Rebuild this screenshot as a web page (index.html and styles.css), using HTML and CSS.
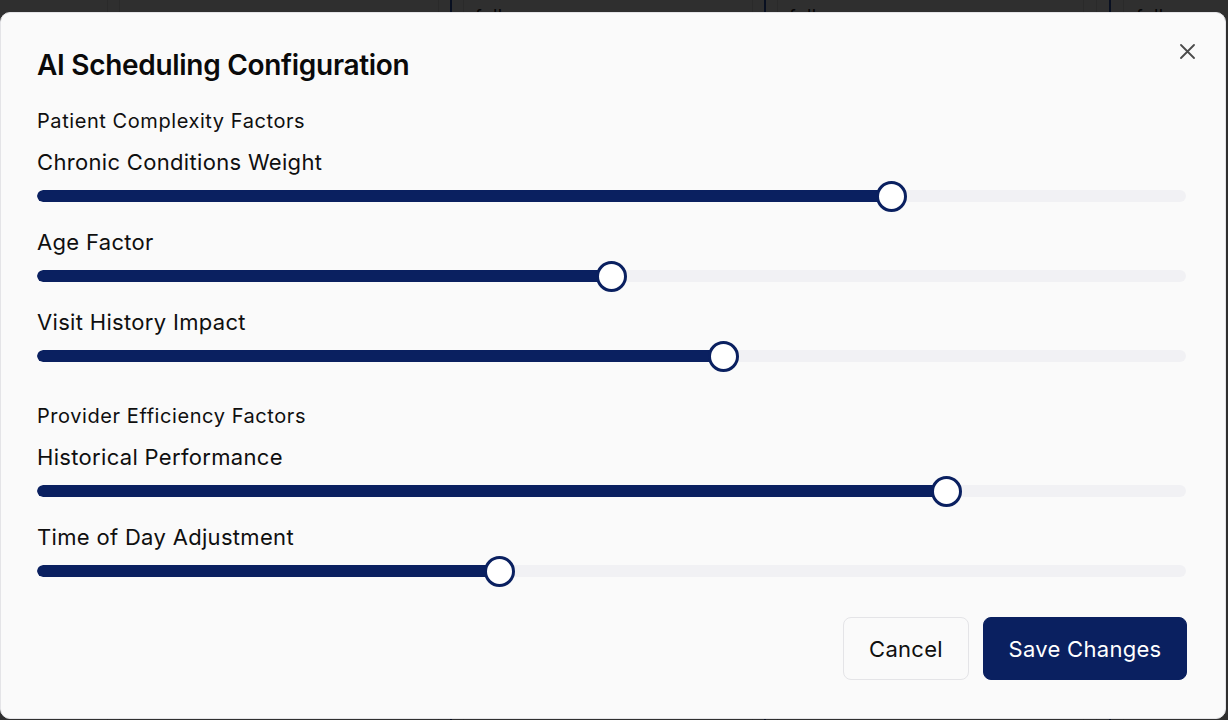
FILE: index.html
```html
<!DOCTYPE html>
<html lang="en">
<head>
<meta charset="utf-8">
<title>AI Scheduling Configuration</title>
<link rel="stylesheet" href="styles.css">
</head>
<body>
<div class="board">
  <div class="col col-a"><span class="rule"></span><span class="rule"></span></div>
  <div class="col col-b"><span class="rule"></span><span class="rule blue"></span><span class="rule"></span><span class="chip">follow-up</span></div>
  <div class="col col-c"><span class="rule"></span><span class="rule blue"></span><span class="rule"></span><span class="chip">follow-up</span></div>
  <div class="col col-d"><span class="rule"></span><span class="rule"></span><span class="rule blue"></span><span class="rule"></span><span class="chip">follow-up</span></div>
</div>

<div class="overlay"></div>

<div class="modal" role="dialog" aria-labelledby="dlg-title">
  <button class="close" aria-label="Close">
    <svg width="15" height="15" viewBox="0 0 15 15"><path d="M1 1 L14 14 M14 1 L1 14" stroke="#4b4b4b" stroke-width="1.8" stroke-linecap="round" fill="none"/></svg>
  </button>
  <h2 id="dlg-title" class="title">AI Scheduling Configuration</h2>

  <section class="group">
    <h3 class="group-title">Patient Complexity Factors</h3>
    <div class="field">
      <div class="label">Chronic Conditions Weight</div>
      <div class="slider" style="--v:0.75"><div class="track"><div class="fill"></div></div><div class="thumb"></div></div>
    </div>
    <div class="field">
      <div class="label">Age Factor</div>
      <div class="slider" style="--v:0.5"><div class="track"><div class="fill"></div></div><div class="thumb"></div></div>
    </div>
    <div class="field">
      <div class="label">Visit History Impact</div>
      <div class="slider" style="--v:0.6"><div class="track"><div class="fill"></div></div><div class="thumb"></div></div>
    </div>
  </section>

  <section class="group group-2">
    <h3 class="group-title">Provider Efficiency Factors</h3>
    <div class="field">
      <div class="label">Historical Performance</div>
      <div class="slider" style="--v:0.8"><div class="track"><div class="fill"></div></div><div class="thumb"></div></div>
    </div>
    <div class="field">
      <div class="label">Time of Day Adjustment</div>
      <div class="slider" style="--v:0.4"><div class="track"><div class="fill"></div></div><div class="thumb"></div></div>
    </div>
  </section>

  <div class="footer">
    <button class="btn btn-cancel">Cancel</button>
    <button class="btn btn-save">Save Changes</button>
  </div>
</div>
</body>
</html>
```

FILE: styles.css
```css
* { box-sizing: border-box; }
html, body { margin: 0; padding: 0; }
body {
  width: 1228px;
  height: 720px;
  overflow: hidden;
  background: #7a7a7a;
  font-family: Inter, "Noto Sans", "Liberation Sans", sans-serif;
  color: #0f0f0f;
}

/* page behind the dialog */
.board {
  display: flex;
  height: 720px;
  background: #e9e9e9;
}
.col {
  display: flex;
  align-items: flex-start;
  height: 100%;
}
.col-a { width: 438px; padding-left: 107px; gap: 11px; }
.col-b { width: 314px; gap: 11px; }
.col-c { width: 331px; gap: 11px; }
.col-d { flex: 1; gap: 12px; }
.rule {
  width: 1px;
  height: 100%;
  background: #d0d0d0;
}
.rule.blue { background: #2c4aa0; width: 2px; }
.chip {
  margin-top: 6px;
  font-size: 18px;
  color: #222;
  letter-spacing: 0.5px;
}

.overlay {
  position: fixed;
  inset: 0;
  background: rgba(0, 0, 0, 0.8);
}

/* dialog */
.modal {
  position: fixed;
  left: 0;
  top: 12px;
  width: 1226px;
  height: 707px;
  background: #fafafa;
  border: 1px solid #e4e4e7;
  border-radius: 10px;
  padding: 34px 39px 0 36px;
  display: flex;
  flex-direction: column;
}

.close {
  position: absolute;
  top: 31px;
  right: 30px;
  width: 15px;
  height: 15px;
  padding: 0;
  border: 0;
  background: none;
  display: flex;
}

.title {
  margin: 0 0 24px;
  font-size: 28px;
  line-height: 36px;
  font-weight: 600;
  letter-spacing: -0.3px;
  color: #0a0a0a;
}

.group {
  display: flex;
  flex-direction: column;
  gap: 15px;
}
.group-2 { margin-top: 30px; }

.group-title {
  margin: 0 0 -3px;
  font-size: 20px;
  line-height: 28px;
  font-weight: 400;
  letter-spacing: 0.57px;
  color: #0f0f0f;
}

.field {
  display: flex;
  flex-direction: column;
  gap: 3px;
}
.label {
  font-size: 22px;
  line-height: 30px;
  letter-spacing: 0.32px;
  color: #0f0f0f;
}

.slider {
  position: relative;
  height: 32px;
  display: flex;
  align-items: center;
}
.track {
  width: 100%;
  height: 12px;
  border-radius: 6px;
  background: #f1f1f4;
  overflow: hidden;
}
.fill {
  height: 100%;
  width: calc(15.5px + var(--v) * (100% - 31px));
  background: #0a2060;
  border-radius: 6px 0 0 6px;
}
.thumb {
  position: absolute;
  top: 0.5px;
  left: calc(var(--v) * (100% - 31px));
  width: 31px;
  height: 31px;
  border-radius: 50%;
  background: #ffffff;
  border: 3px solid #0a2060;
}

.footer {
  margin-top: 30px;
  margin-right: -1px;
  display: flex;
  justify-content: flex-end;
  gap: 14px;
}
.btn {
  height: 63px;
  padding: 0 20px;
  border-radius: 8px;
  font-family: inherit;
  font-size: 22px;
  line-height: 30px;
  font-weight: 400;
  letter-spacing: 0.3px;
  cursor: pointer;
}
.btn-cancel {
  width: 126px;
  background: #fafafa;
  border: 1px solid #e4e4e7;
  color: #0f0f0f;
}
.btn-save {
  width: 204px;
  background: #0a2060;
  border: 1px solid #0a2060;
  color: #ffffff;
}
```
